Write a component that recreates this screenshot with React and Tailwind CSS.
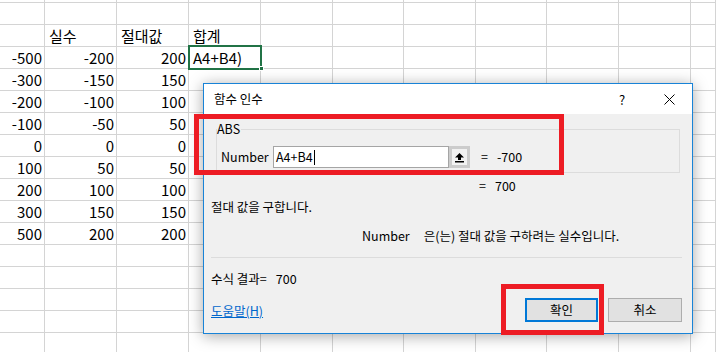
import React from 'react'

const font = { fontFamily: '"Noto Sans CJK KR", "Noto Sans", sans-serif' }

const colWidths = [45, 72, 72, 72, 72, 71, 72, 71, 72, 72, 25]

const rows = [
  ['', '', '', ''],
  ['', '실수', '절대값', '합계'],
  ['-500', '-200', '200', 'A4+B4)'],
  ['-300', '-150', '150', ''],
  ['-200', '-100', '100', ''],
  ['-100', '-50', '50', ''],
  ['0', '0', '0', ''],
  ['100', '50', '50', ''],
  ['200', '100', '100', ''],
  ['300', '150', '150', ''],
  ['500', '200', '200', ''],
  ['', '', '', ''],
  ['', '', '', ''],
  ['', '', '', ''],
  ['', '', '', ''],
  ['', '', '', ''],
]

function Sheet() {
  return (
    <div className="flex flex-col">
      <div className="flex h-[3px]">
        {colWidths.map((w, i) => (
          <div key={i} style={{ width: w }} className="shrink-0 border-r border-b border-[#d4d4d4]" />
        ))}
      </div>
      {rows.map((r, ri) => (
        <div key={ri} className="flex h-[22px]">
          {colWidths.map((w, ci) => {
            const v = r[ci] || ''
            const isText = ci === 3 || ri === 1
            return (
              <div
                key={ci}
                style={{ width: w }}
                className={`shrink-0 border-r border-b border-[#d4d4d4] flex items-end pb-[1px] text-[15px] leading-[18px] text-black ${
                  isText ? 'justify-start pl-[4px]' : 'justify-end pr-[2px]'
                }`}
              >
                {v}
              </div>
            )
          })}
        </div>
      ))}
    </div>
  )
}

function UploadIcon() {
  return (
    <svg width="11" height="11" viewBox="0 0 11 11">
      <path d="M5.5 1 L10 5.5 H7 V8 H4 V5.5 H1 Z" fill="#000" />
      <rect x="1" y="9" width="9" height="1.5" fill="#000" />
    </svg>
  )
}

function Dialog() {
  return (
    <div className="absolute left-[203px] top-[83px] w-[490px] h-[251px] border border-[#1883d7] bg-[#f0f0f0] shadow-[0_2px_14px_rgba(0,0,0,0.35)] flex flex-col text-[12.5px] text-black">
      <div className="h-[30px] bg-white flex items-center pl-[10px] relative">
        <span>함수 인수</span>
        <span className="absolute left-[415px] top-[6px] text-[13px]">?</span>
        <svg className="absolute left-[460px] top-[10px]" width="11" height="11" viewBox="0 0 11 11">
          <path d="M0.5 0.5 L10.5 10.5 M10.5 0.5 L0.5 10.5" stroke="#000" strokeWidth="1" />
        </svg>
      </div>
      <div className="flex flex-col px-[12px] pt-[15px]">
        <div className="relative h-[44px] border border-[#dcdcdc] flex items-center pl-[4px]">
          <span className="absolute -top-[9px] left-[0px] bg-[#f0f0f0] pr-[1px] leading-[16px]">ABS</span>
          <span className="w-[52px] mt-[12px]">Number</span>
          <div className="mt-[12px] flex h-[22px] w-[197px]">
            <div className="flex-1 bg-white border border-[#a5a5a5] flex items-center pl-[2px]">
              A4+B4<span className="w-[1px] h-[15px] bg-black ml-[1px]" />
            </div>
            <div className="w-[21px] bg-[#cccccc] flex items-center justify-center">
              <div className="w-[15px] h-[16px] bg-[#f2f2f2] flex items-center justify-center">
                <UploadIcon />
              </div>
            </div>
          </div>
          <span className="mt-[12px] ml-[11px]">=</span>
          <span className="mt-[12px] ml-[9px]">-700</span>
        </div>
        <div className="h-[26px] flex items-center pl-[263px]">
          <span>=</span>
          <span className="ml-[9px]">700</span>
        </div>
        <div className="h-[16px] flex items-center -ml-[5px]">절대 값을 구합니다.</div>
        <div className="h-[42px] flex items-center pl-[146px]">
          <span>Number</span>
          <span className="ml-[14px]">은(는) 절대 값을 구하려는 실수입니다.</span>
        </div>
        <div className="h-[1px] bg-[#dcdcdc] -ml-[5px] mr-[-2px]" />
        <div className="h-[42px] flex items-center -ml-[5px]">
          <span>수식 결과=</span>
          <span className="ml-[9px]">700</span>
        </div>
        <div className="flex items-center -ml-[5px]">
          <span className="text-[#0066cc] underline">도움말(H)</span>
          <div className="ml-auto mr-[-2px] flex gap-[10px] -mt-[2px]">
            <div className="w-[73px] h-[24px] border-2 border-[#0078d7] bg-[#e1e1e1] flex items-center justify-center">확인</div>
            <div className="w-[74px] h-[24px] border border-[#adadad] bg-[#e1e1e1] flex items-center justify-center">취소</div>
          </div>
        </div>
      </div>
    </div>
  )
}

export default function App() {
  return (
    <div className="relative w-[716px] h-[352px] overflow-hidden bg-white" style={font}>
      <Sheet />
      {/* selected cell */}
      <div className="absolute left-[188px] top-[45px] w-[74px] h-[25px] border-2 border-[#217346]" />
      <div className="absolute left-[259px] top-[66px] w-[5px] h-[5px] bg-[#217346] border border-white" />
      <Dialog />
      {/* annotation boxes */}
      <div className="absolute left-[194px] top-[114px] w-[370px] h-[61px] border-[5px] border-[#ed1c24]" />
      <div className="absolute left-[501px] top-[284px] w-[103px] h-[51px] border-[5px] border-[#ed1c24]" />
    </div>
  )
}
